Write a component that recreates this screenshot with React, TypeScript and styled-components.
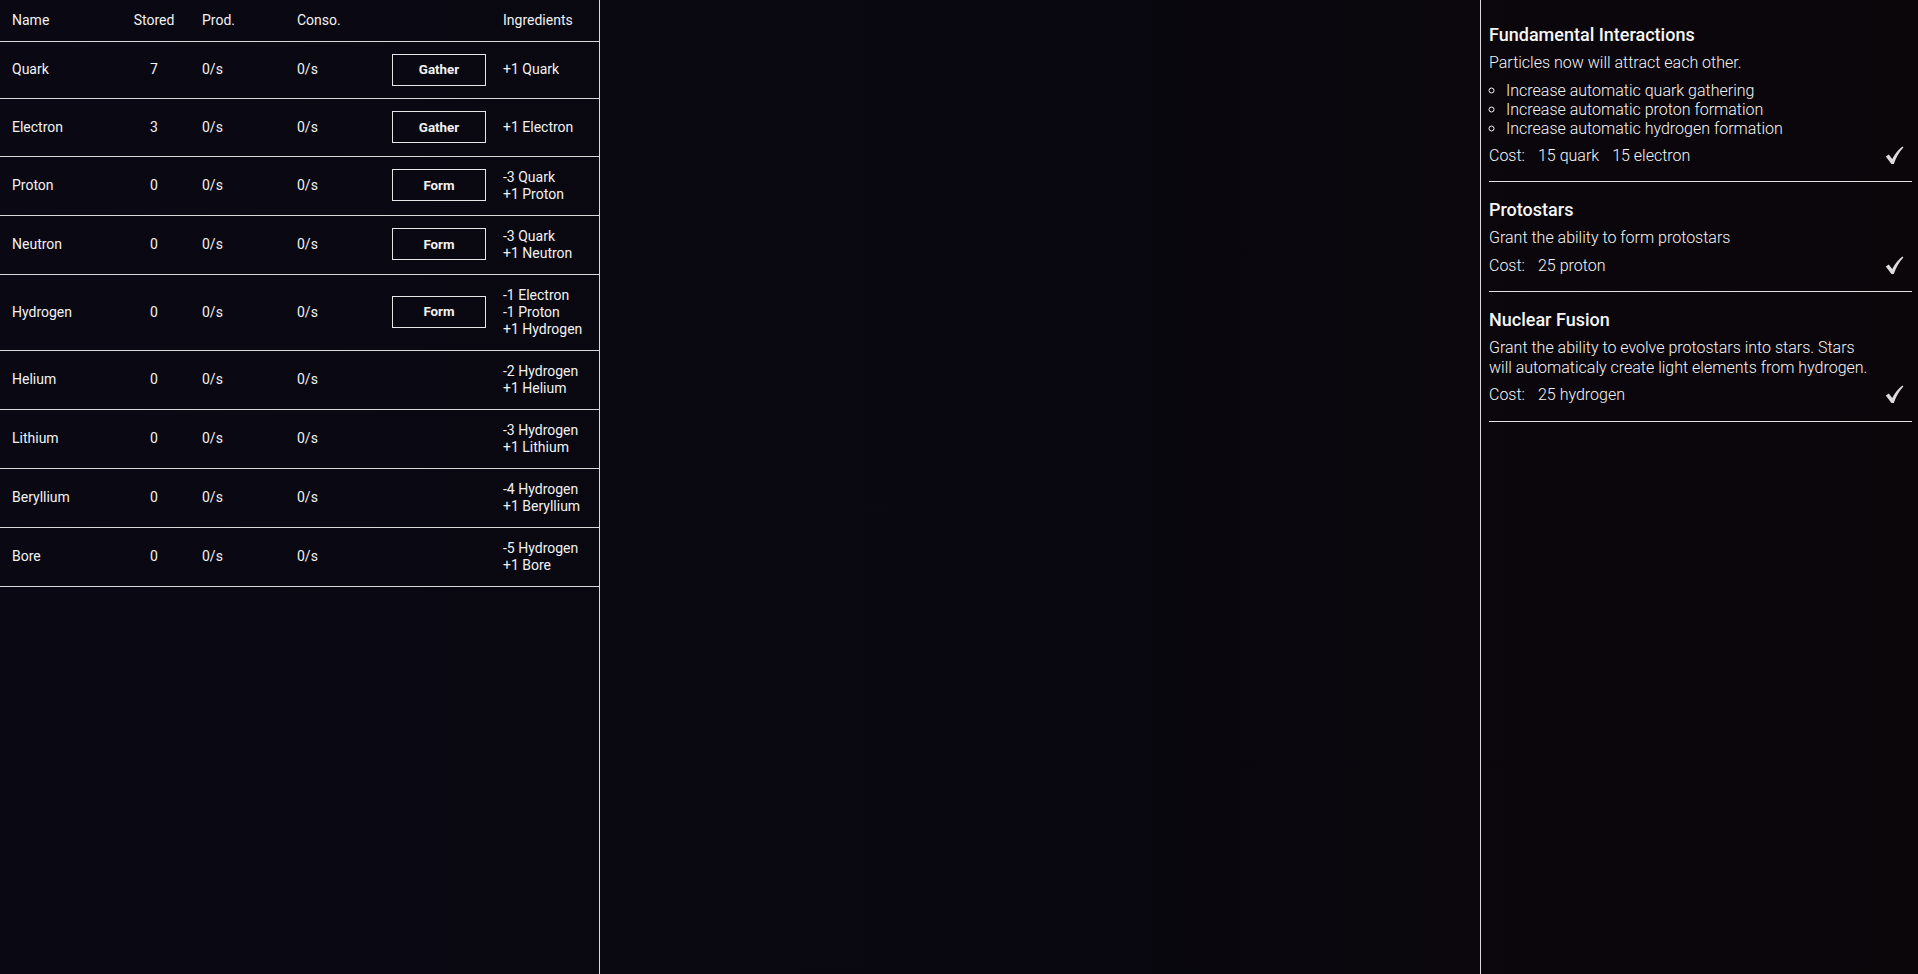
import styled, { createGlobalStyle } from "styled-components";

const GlobalStyle = createGlobalStyle`
  html, body {
    margin: 0;
    padding: 0;
    height: 100%;
  }
  body {
    background: linear-gradient(90deg, #0a0913 0%, #09070f 55%, #0b060a 100%);
    color: #f0f0f0;
    font-family: Roboto, "Noto Sans", sans-serif;
  }
  #root {
    min-height: 100vh;
  }
`;

const Layout = styled.div`
  display: flex;
  min-height: 100vh;
`;

const ResourcePanel = styled.section`
  width: 600px;
  box-sizing: border-box;
  flex: none;
  border-right: 1px solid #d8d8d8;
`;

const Middle = styled.main`
  flex: 1;
`;

const UpgradePanel = styled.aside`
  width: 438px;
  box-sizing: border-box;
  flex: none;
  border-left: 1px solid #d8d8d8;
  padding: 7px 6px 0 8px;
`;

const Table = styled.table`
  width: 599px;
  table-layout: fixed;
  border-collapse: collapse;
  font-size: 14px;
  line-height: 17px;
  color: #f2f2f2;
`;

const Row = styled.tr`
  border-bottom: 1px solid #d8d8d8;
`;

const Cell = styled.td<{ $align?: "left" | "center" }>`
  padding: 12px;
  text-align: ${(p) => p.$align ?? "left"};
  vertical-align: middle;
  white-space: nowrap;
`;

const HeadCell = styled.th<{ $align?: "left" | "center" }>`
  padding: 12px 12px 11.5px;
  font-weight: 400;
  text-align: ${(p) => p.$align ?? "left"};
`;

const ActionButton = styled.button`
  display: block;
  width: 94px;
  height: 32px;
  margin: 0 0 0.5px;
  padding: 0;
  background: transparent;
  border: 1px solid #e6e6e6;
  color: #f2f2f2;
  font-family: Roboto, "Noto Sans", sans-serif;
  font-weight: 700;
  font-size: 13.33px;
  cursor: pointer;
`;

const Lines = styled.div`
  display: flex;
  flex-direction: column;
`;

const Upgrade = styled.article`
  display: flex;
  flex-direction: column;
  gap: 8px;
  padding: 17px 0 16px;
  border-bottom: 1px solid #e0e0e0;
`;

const Title = styled.h3`
  margin: 0;
  font-size: 18px;
  line-height: 21px;
  font-weight: 500;
  color: #f6f6f6;
`;

const Text = styled.p`
  margin: 0;
  max-width: 385px;
  font-size: 16px;
  line-height: 19.5px;
  font-weight: 300;
  color: #f6f6f6;
`;

const Bullets = styled.ul`
  margin: 0;
  padding-left: 17px;
  list-style: circle;
  font-size: 16px;
  line-height: 19px;
  font-weight: 300;
  color: #f6f6f6;
`;

const CostRow = styled.div`
  display: flex;
  align-items: center;
  gap: 13px;
  font-size: 16px;
  line-height: 19.5px;
  font-weight: 300;
  color: #f6f6f6;
`;

const Check = styled.svg`
  margin-left: auto;
  margin-right: 8px;
`;

type Resource = {
  name: string;
  stored: number;
  action?: string;
  ingredients: string[];
};

const resources: Resource[] = [
  { name: "Quark", stored: 7, action: "Gather", ingredients: ["+1 Quark"] },
  { name: "Electron", stored: 3, action: "Gather", ingredients: ["+1 Electron"] },
  { name: "Proton", stored: 0, action: "Form", ingredients: ["-3 Quark", "+1 Proton"] },
  { name: "Neutron", stored: 0, action: "Form", ingredients: ["-3 Quark", "+1 Neutron"] },
  {
    name: "Hydrogen",
    stored: 0,
    action: "Form",
    ingredients: ["-1 Electron", "-1 Proton", "+1 Hydrogen"],
  },
  { name: "Helium", stored: 0, ingredients: ["-2 Hydrogen", "+1 Helium"] },
  { name: "Lithium", stored: 0, ingredients: ["-3 Hydrogen", "+1 Lithium"] },
  { name: "Beryllium", stored: 0, ingredients: ["-4 Hydrogen", "+1 Beryllium"] },
  { name: "Bore", stored: 0, ingredients: ["-5 Hydrogen", "+1 Bore"] },
];

type UpgradeData = {
  title: string;
  text: string;
  bullets?: string[];
  cost: string[];
};

const upgrades: UpgradeData[] = [
  {
    title: "Fundamental Interactions",
    text: "Particles now will attract each other.",
    bullets: [
      "Increase automatic quark gathering",
      "Increase automatic proton formation",
      "Increase automatic hydrogen formation",
    ],
    cost: ["15 quark", "15 electron"],
  },
  {
    title: "Protostars",
    text: "Grant the ability to form protostars",
    cost: ["25 proton"],
  },
  {
    title: "Nuclear Fusion",
    text: "Grant the ability to evolve protostars into stars. Stars will automaticaly create light elements from hydrogen.",
    cost: ["25 hydrogen"],
  },
];

function CheckIcon() {
  return (
    <Check width="19" height="19" viewBox="0 0 19 19">
      <path
        d="M0.8 10.4 L3.8 8.6 L7.2 12.9 Q11.2 5.2 17.4 0.4 L18.4 1.6 Q12.6 7.6 8.8 18 L6.4 18 Z"
        fill="#dcdcdc"
      />
    </Check>
  );
}

function ResourceTable() {
  return (
    <Table>
      <colgroup>
        <col style={{ width: 118 }} />
        <col style={{ width: 72 }} />
        <col style={{ width: 95 }} />
        <col style={{ width: 95 }} />
        <col style={{ width: 111 }} />
        <col style={{ width: 108 }} />
      </colgroup>
      <thead>
        <Row>
          <HeadCell>Name</HeadCell>
          <HeadCell $align="center">Stored</HeadCell>
          <HeadCell>Prod.</HeadCell>
          <HeadCell>Conso.</HeadCell>
          <HeadCell />
          <HeadCell>Ingredients</HeadCell>
        </Row>
      </thead>
      <tbody>
        {resources.map((r) => (
          <Row key={r.name}>
            <Cell>{r.name}</Cell>
            <Cell $align="center">{r.stored}</Cell>
            <Cell>0/s</Cell>
            <Cell>0/s</Cell>
            <Cell>{r.action && <ActionButton>{r.action}</ActionButton>}</Cell>
            <Cell>
              <Lines>
                {r.ingredients.map((i) => (
                  <span key={i}>{i}</span>
                ))}
              </Lines>
            </Cell>
          </Row>
        ))}
      </tbody>
    </Table>
  );
}

export default function App() {
  return (
    <>
      <GlobalStyle />
      <Layout>
        <ResourcePanel>
          <ResourceTable />
        </ResourcePanel>
        <Middle />
        <UpgradePanel>
          {upgrades.map((u) => (
            <Upgrade key={u.title}>
              <Title>{u.title}</Title>
              <Text>{u.text}</Text>
              {u.bullets && (
                <Bullets>
                  {u.bullets.map((b) => (
                    <li key={b}>{b}</li>
                  ))}
                </Bullets>
              )}
              <CostRow>
                <span>Cost:</span>
                {u.cost.map((c) => (
                  <span key={c}>{c}</span>
                ))}
                <CheckIcon />
              </CostRow>
            </Upgrade>
          ))}
        </UpgradePanel>
      </Layout>
    </>
  );
}
